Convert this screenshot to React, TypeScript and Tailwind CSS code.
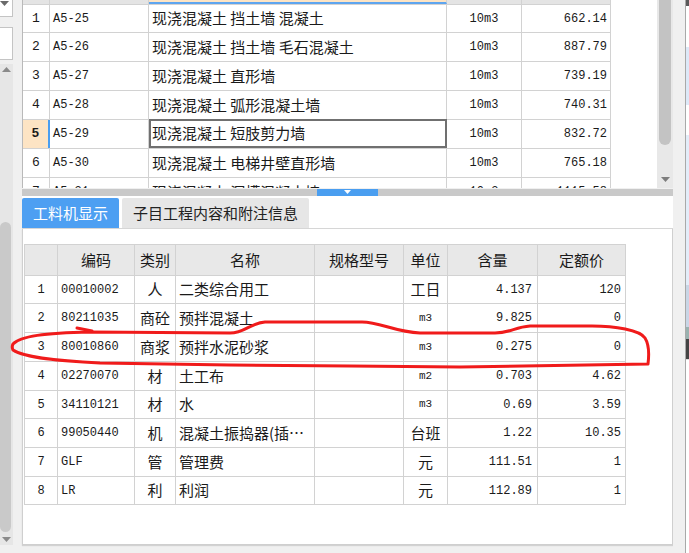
const cjk = "font-['Noto_Sans_CJK_SC',sans-serif]";
const mono = "font-['Liberation_Mono',monospace]";

const topRows = [
  ["1", "A5-25", "现浇混凝土 挡土墙 混凝土", "10m3", "662.14"],
  ["2", "A5-26", "现浇混凝土 挡土墙 毛石混凝土", "10m3", "887.79"],
  ["3", "A5-27", "现浇混凝土 直形墙", "10m3", "739.19"],
  ["4", "A5-28", "现浇混凝土 弧形混凝土墙", "10m3", "740.31"],
  ["5", "A5-29", "现浇混凝土 短肢剪力墙", "10m3", "832.72"],
  ["6", "A5-30", "现浇混凝土 电梯井壁直形墙", "10m3", "765.18"],
  ["7", "A5-31", "现浇混凝土 洞槽混凝土墙", "10m3", "1115.58"],
];
const topHeights = ["h-[28px]", "h-[29px]", "h-[29px]", "h-[29px]", "h-[29px]", "h-[29px]", "h-[29px]"];

const items = [
  ["1", "00010002", "人", "二类综合用工", "", "工日", "4.137", "120"],
  ["2", "80211035", "商砼", "预拌混凝土", "", "m3", "9.825", "0"],
  ["3", "80010860", "商浆", "预拌水泥砂浆", "", "m3", "0.275", "0"],
  ["4", "02270070", "材", "土工布", "", "m2", "0.703", "4.62"],
  ["5", "34110121", "材", "水", "", "m3", "0.69", "3.59"],
  ["6", "99050440", "机", "混凝土振捣器(插…", "", "台班", "1.22", "10.35"],
  ["7", "GLF", "管", "管理费", "", "元", "111.51", "1"],
  ["8", "LR", "利", "利润", "", "元", "112.89", "1"],
];
const itemHeights = ["h-[28px]", "h-[29px]", "h-[29px]", "h-[29px]", "h-[28px]", "h-[29px]", "h-[29px]", "h-[28px]"];
const headers = ["", "编码", "类别", "名称", "规格型号", "单位", "含量", "定额价"];
const widths = ["w-[33px]", "w-[77px]", "w-[41px]", "w-[139px]", "w-[89px]", "w-[44px]", "w-[90px]", "w-[88px]"];

function Down({ c = "#7a7a7a" }: { c?: string }) {
  return (
    <svg width="9" height="5" viewBox="0 0 9 5">
      <polygon points="0,0 9,0 4.5,5" fill={c} />
    </svg>
  );
}

function Up() {
  return (
    <svg width="9" height="5" viewBox="0 0 9 5">
      <polygon points="0,5 9,5 4.5,0" fill="#8a8a8a" />
    </svg>
  );
}

function LeftBar() {
  return (
    <div className="w-[22px] flex flex-col shrink-0">
      <div className="w-[13px] h-[17px] bg-white border-r border-b border-[#c4c4c4] pl-[0px] pt-[1px]">
        <Down c="#6a6a6a" />
      </div>
      <div className="h-[10px]" />
      <div className="w-[13px] h-[33px] bg-white border border-l-0 border-[#c4c4c4]" />
      <div className="h-[4px]" />
      <div className="w-[13px] flex-1 bg-[#e6e6e6] flex flex-col items-center">
        <div className="pt-[3px] h-[8px] flex">
          <Up />
        </div>
        <div className="h-[150px]" />
        <div className="w-[11px] h-[310px] self-start bg-[#c9c9c9] rounded-[6px]" />
        <div className="mt-[5px]">
          <Down c="#8a8a8a" />
        </div>
      </div>
      <div className="h-[8px]" />
    </div>
  );
}

function TopTable() {
  return (
    <div className="flex h-[188px] bg-white overflow-hidden">
      <div className="w-[589px] border-l border-[#b9b9b9] flex flex-col shrink-0 overflow-hidden">
        <div className="flex h-[5px] border-b border-[#d2d2d2] shrink-0">
          <div className="w-[27px] bg-[#e4e4e4] border-r border-[#d2d2d2]" />
          <div className="w-[99px] bg-[#e4e4e4] border-r border-[#d2d2d2]" />
          <div className="w-[298px] bg-[#fde4c4] border-r border-[#d2d2d2] border-b-2 border-b-[#5ea5ef]" />
          <div className="w-[75px] bg-[#e4e4e4] border-r border-[#d2d2d2]" />
          <div className="w-[89px] bg-[#e4e4e4] border-r border-[#d2d2d2]" />
        </div>
        {topRows.map((r, i) => {
          const sel = r[0] === "5";
          return (
            <div key={r[0]} className={`flex shrink-0 border-b border-[#d2d2d2] text-[#1a1a1a] ${topHeights[i]}`}>
              <div
                className={`w-[27px] flex items-center justify-center text-[13px] ${mono} ${
                  sel ? "bg-[#fde4c4] font-bold border-r-2 border-[#4a9ef0]" : "border-r border-[#d2d2d2]"
                }`}
              >
                {r[0]}
              </div>
              <div className={`w-[99px] flex items-center pl-[3px] text-[12px] border-r border-[#d2d2d2] ${mono}`}>{r[1]}</div>
              <div
                className={`w-[298px] flex items-center text-[15px] whitespace-nowrap ${cjk} ${
                  sel ? "border-2 border-[#707070] pl-[1px] mt-[-1px] h-[29px]" : "border-r border-[#d2d2d2] pl-[3px]"
                }`}
              >
                {r[2]}
              </div>
              <div className={`w-[75px] flex items-center justify-center text-[12px] border-r border-[#d2d2d2] ${mono}`}>{r[3]}</div>
              <div className={`w-[89px] flex items-center justify-end pr-[3px] text-[12px] border-r border-[#d2d2d2] ${mono}`}>{r[4]}</div>
            </div>
          );
        })}
      </div>
      <div className="w-[46px] shrink-0" />
      <div className="w-[16px] shrink-0 bg-[#e8e8e8] flex flex-col items-center">
        <div className="w-[12px] h-[145px] bg-[#c3c3c3] rounded-b-[6px]" />
        <div className="mt-[32px]">
          <Down c="#7d7d7d" />
        </div>
      </div>
    </div>
  );
}

function Splitter() {
  return (
    <div className="h-[8px] flex items-stretch pt-[1px] shrink-0">
      <div className="w-[295px] bg-[#c9c9c9]" />
      <div className="w-[61px] bg-[#4a9ef0] flex justify-center items-start pt-[1px]">
        <svg width="7" height="4" viewBox="0 0 7 4">
          <polygon points="0,0 7,0 3.5,4" fill="#ffffff" />
        </svg>
      </div>
      <div className="flex-1 bg-[#c9c9c9]" />
    </div>
  );
}

function LowerTable() {
  return (
    <div className={`ml-[1px] w-[602px] border-l border-t border-[#d2d2d2] text-[#1a1a1a]`}>
      <div className="flex h-[31px] border-b border-[#d2d2d2] bg-[#e8e8e8]">
        {headers.map((h, i) => (
          <div key={i} className={`${widths[i]} flex items-center justify-center text-[15px] border-r border-[#d2d2d2] ${cjk}`}>
            {h}
          </div>
        ))}
      </div>
      {items.map((r, ri) => (
        <div key={r[0]} className={`flex border-b border-[#d2d2d2] bg-white ${itemHeights[ri]}`}>
          {r.map((v, i) => {
            const latin = /^[A-Za-z0-9.]*$/.test(v);
            let align = "justify-center";
            if (i === 1 || i === 3) align = "justify-start pl-[3px]";
            if (i === 6) align = "justify-end pr-[5px]";
            if (i === 7) align = "justify-end pr-[4px]";
            let font = latin ? `${mono} text-[12px]` : `${cjk} text-[15px]`;
            if (i === 5 && latin) font = `${mono} text-[11px]`;
            return (
              <div key={i} className={`${widths[i]} flex items-center whitespace-nowrap overflow-hidden border-r border-[#d2d2d2] ${align} ${font}`}>
                {v}
              </div>
            );
          })}
        </div>
      ))}
    </div>
  );
}

function LowerPanel() {
  return (
    <div className="flex-1 flex flex-col">
      <div className="h-[33px] bg-white flex items-start pt-[2px] gap-[3px] border-b border-[#d6d6d6] shrink-0">
        <div className={`w-[97px] h-[30px] bg-[#4d9ff2] text-white text-[15px] flex items-center justify-center rounded-t-[2px] ${cjk}`}>
          工料机显示
        </div>
        <div className={`w-[187px] h-[30px] bg-[#e6e6e6] text-[#222] text-[15px] flex items-center justify-center rounded-t-[2px] ${cjk}`}>
          子目工程内容和附注信息
        </div>
      </div>
      <div className="h-[316px] bg-white border-l border-r border-b border-[#cfcfcf] pt-[15px] shadow-[0_1px_1px_rgba(0,0,0,0.12)]">
        <LowerTable />
      </div>
    </div>
  );
}

function RightStrip() {
  return (
    <div className="w-[16px] flex shrink-0">
      <div className="w-[12px] bg-[#f0f0f0]" />
      <div className="w-[1px] bg-[#a9a9a9]" />
      <div className="flex-1 flex flex-col bg-white">
        <div className="h-[6px] bg-[#5a5a5a]" />
        <div className="h-[41px]" />
        <div className="h-[58px] bg-[#dde9f8]" />
        <div className="h-[30px]" />
        <div className="h-[150px] bg-[#e3edf9]" />
        <div className="h-[42px] bg-[#c9d6e6]" />
        <div className="h-[12px] bg-[#9ab2b0]" />
        <div className="h-[20px] bg-[#444]" />
        <div className="flex-1 bg-white border-t border-[#ddd]" />
      </div>
    </div>
  );
}

export default function App() {
  return (
    <div className="relative w-[689px] h-[553px] bg-[#f0f0f0] flex overflow-hidden">
      <LeftBar />
      <div className="w-[651px] flex flex-col shrink-0">
        <TopTable />
        <Splitter />
        <LowerPanel />
        <div className="h-[8px]" />
      </div>
      <RightStrip />
      <svg className="absolute inset-0 pointer-events-none" width="689" height="553" viewBox="0 0 689 553">
        <path
          d="M 13 344 C 20 336, 45 333, 90 332 L 230 333 C 245 333, 250 323, 265 322 L 362 322 C 380 322, 395 332, 420 333 L 495 333 C 510 333, 515 327, 530 326 L 592 326 C 615 326, 640 330, 645 338 C 650 346, 649 356, 648 364 L 460 367 L 350 366 L 230 365 L 100 363 C 60 361, 25 358, 13 350 C 12 348, 12 346, 13 344"
          fill="none"
          stroke="#f01b1b"
          strokeWidth="3"
          strokeLinecap="round"
          strokeLinejoin="round"
        />
        <path d="M 77 328 L 92 331" fill="none" stroke="#f01b1b" strokeWidth="3" strokeLinecap="round" />
      </svg>
    </div>
  );
}
